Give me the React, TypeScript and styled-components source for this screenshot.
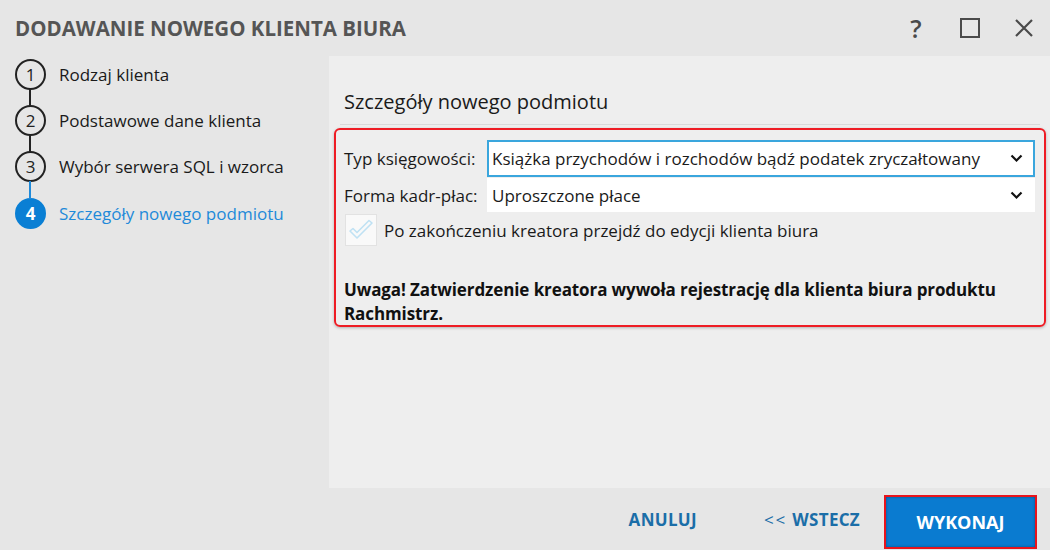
import styled, { createGlobalStyle } from "styled-components";

const GlobalStyle = createGlobalStyle`
  html, body {
    margin: 0;
    padding: 0;
    background: #e6e6e6;
  }
  body {
    font-family: "Open Sans", "Noto Sans", "Liberation Sans", sans-serif;
  }
`;

const Window = styled.div`
  width: 1050px;
  height: 550px;
  display: flex;
  flex-direction: column;
  background: #e6e6e6;
  overflow: hidden;
`;

const TitleBar = styled.div`
  height: 56px;
  display: flex;
  align-items: center;
  padding: 0 12px 0 15px;
  box-sizing: border-box;
`;

const Title = styled.h1`
  flex: 1;
  margin: 0;
  font-size: 20.5px;
  font-weight: 700;
  color: #555;
`;

const WinButtons = styled.div`
  display: flex;
  align-items: center;
  gap: 26px;
  color: #4a4a4a;
`;

const WinButton = styled.button`
  width: 28px;
  height: 28px;
  padding: 0;
  border: none;
  background: none;
  display: flex;
  align-items: center;
  justify-content: center;
  color: inherit;
  font-family: "Open Sans", sans-serif;
  font-size: 25px;
  font-weight: 600;
`;

const Main = styled.div`
  flex: 1;
  display: flex;
`;

const Sidebar = styled.div`
  width: 329px;
  margin-top: -5px;
  display: flex;
  flex-direction: column;
`;

const Step = styled.div<{ $active?: boolean }>`
  display: flex;
  align-items: center;
  height: 46.4px;
  padding-left: 15px;
  position: relative;
  color: ${(p) => (p.$active ? "#1f8ad9" : "#1a1a1a")};
  font-size: 17px;
`;

const Connector = styled.div<{ $blue?: boolean }>`
  position: absolute;
  left: 29px;
  bottom: calc(50% + 14px);
  height: 18px;
  width: 2px;
  background: ${(p) => (p.$blue ? "#1f8ad9" : "#222")};
`;

const Circle = styled.div<{ $active?: boolean }>`
  width: 31px;
  height: 31px;
  box-sizing: border-box;
  border-radius: 50%;
  border: 2px solid ${(p) => (p.$active ? "#0a7fd4" : "#222")};
  background: ${(p) => (p.$active ? "#0a7fd4" : "transparent")};
  color: ${(p) => (p.$active ? "#fff" : "#222")};
  font-weight: ${(p) => (p.$active ? 700 : 400)};
  font-size: 17px;
  display: flex;
  align-items: center;
  justify-content: center;
  margin-right: 13px;
  flex-shrink: 0;
`;

const Content = styled.div`
  flex: 1;
  background: #eeeeee;
  padding: 0 4px 0 5px;
  display: flex;
  flex-direction: column;
`;

const Heading = styled.h2`
  margin: 0 6px;
  padding: 33px 0 9px 4px;
  font-size: 20px;
  line-height: 26px;
  font-weight: 400;
  color: #1a1a1a;
  border-bottom: 1px solid #d9d9d9;
`;

const Highlight = styled.div`
  margin-top: 3px;
  border: 2px solid #ee1c24;
  border-radius: 6px;
  padding: 10px 9px 0 8px;
  height: 199px;
  box-sizing: border-box;
  box-shadow: 0 1px 3px rgba(0, 0, 0, 0.25);
`;

const FormGrid = styled.div`
  display: grid;
  grid-template-columns: 143px 1fr;
  row-gap: 1px;
  align-items: center;
`;

const Label = styled.label`
  font-size: 17px;
  color: #1a1a1a;
`;

const Select = styled.div<{ $focused?: boolean }>`
  height: ${(p) => (p.$focused ? "37px" : "34px")};
  box-sizing: border-box;
  background: #fff;
  border: 2px solid ${(p) => (p.$focused ? "#3aa6dd" : "#fff")};
  display: flex;
  align-items: center;
  padding: 0 10px 0 3px;
  font-size: 17px;
  color: #1a1a1a;
`;

const SelectText = styled.span`
  flex: 1;
  white-space: nowrap;
`;

const CheckRow = styled.div`
  display: flex;
  align-items: center;
  gap: 7px;
  margin-top: 2px;
  font-size: 17px;
  color: #1a1a1a;
`;

const CheckBox = styled.div`
  width: 32px;
  height: 32px;
  box-sizing: border-box;
  border: 1px solid #e2e2e2;
  background: #f9f9f9;
  display: flex;
  align-items: center;
  justify-content: center;
  margin-left: 1px;
`;

const Warning = styled.p`
  margin: 32px 0 0;
  font-size: 17px;
  line-height: 24px;
  font-weight: 700;
  color: #111;
  letter-spacing: -0.1px;
`;

const Footer = styled.div`
  height: 62px;
  display: flex;
  align-items: center;
  justify-content: flex-end;
  padding-right: 13px;
`;

const TextButton = styled.button<{ $gap: number }>`
  border: none;
  background: none;
  font-family: "Open Sans", sans-serif;
  font-size: 17px;
  font-weight: 700;
  color: #1b6ea8;
  padding: 0;
  margin-right: ${(p) => p.$gap}px;
  letter-spacing: 0.3px;
`;

const Arrows = styled.span`
  font-weight: 400;
  letter-spacing: 2px;
  margin-right: 5px;
`;

const PrimaryButton = styled.button`
  width: 153px;
  height: 54px;
  margin-top: 5px;
  box-sizing: border-box;
  border: 2px solid #e8141c;
  background: #0a7bd0;
  color: #fff;
  font-family: "Open Sans", sans-serif;
  font-size: 18px;
  font-weight: 700;
  box-shadow: inset 0 0 3px rgba(0, 0, 0, 0.35);
`;

const Chevron = () => (
  <svg width="13" height="9" viewBox="0 0 13 9">
    <path d="M1.5 1.5 L6.5 6.5 L11.5 1.5" fill="none" stroke="#111" strokeWidth="2.2" />
  </svg>
);

const steps = [
  "Rodzaj klienta",
  "Podstawowe dane klienta",
  "Wybór serwera SQL i wzorca",
  "Szczegóły nowego podmiotu",
];

export default function App() {
  return (
    <Window>
      <GlobalStyle />
      <TitleBar>
        <Title>DODAWANIE NOWEGO KLIENTA BIURA</Title>
        <WinButtons>
          <WinButton>?</WinButton>
          <WinButton>
            <svg width="20" height="20" viewBox="0 0 20 20">
              <rect x="1" y="1" width="18" height="18" fill="none" stroke="#4a4a4a" strokeWidth="2" />
            </svg>
          </WinButton>
          <WinButton>
            <svg width="20" height="20" viewBox="0 0 20 20">
              <path d="M2 2 L18 18 M18 2 L2 18" stroke="#4a4a4a" strokeWidth="2.2" />
            </svg>
          </WinButton>
        </WinButtons>
      </TitleBar>
      <Main>
        <Sidebar>
          {steps.map((s, i) => {
            const active = i === steps.length - 1;
            return (
              <Step key={s} $active={active}>
                {i > 0 && <Connector $blue={active} />}
                <Circle $active={active}>{i + 1}</Circle>
                {s}
              </Step>
            );
          })}
        </Sidebar>
        <Content>
          <Heading>Szczegóły nowego podmiotu</Heading>
          <Highlight>
            <FormGrid>
              <Label>Typ księgowości:</Label>
              <Select $focused>
                <SelectText>Książka przychodów i rozchodów bądź podatek zryczałtowany</SelectText>
                <Chevron />
              </Select>
              <Label>Forma kadr-płac:</Label>
              <Select>
                <SelectText>Uproszczone płace</SelectText>
                <Chevron />
              </Select>
            </FormGrid>
            <CheckRow>
              <CheckBox>
                <svg width="26" height="22" viewBox="0 0 26 22">
                  <path
                    d="M2 12 L9 19 L24 4 L21 1.5 L9 13.5 L5 9.5 Z"
                    fill="none"
                    stroke="#bfe1f3"
                    strokeWidth="1.6"
                    strokeLinejoin="round"
                  />
                </svg>
              </CheckBox>
              Po zakończeniu kreatora przejdź do edycji klienta biura
            </CheckRow>
            <Warning>
              Uwaga! Zatwierdzenie kreatora wywoła rejestrację dla klienta biura produktu
              <br />
              Rachmistrz.
            </Warning>
          </Highlight>
        </Content>
      </Main>
      <Footer>
        <TextButton $gap={67}>ANULUJ</TextButton>
        <TextButton $gap={24}>
          <Arrows>&lt;&lt;</Arrows>WSTECZ
        </TextButton>
        <PrimaryButton>WYKONAJ</PrimaryButton>
      </Footer>
    </Window>
  );
}
